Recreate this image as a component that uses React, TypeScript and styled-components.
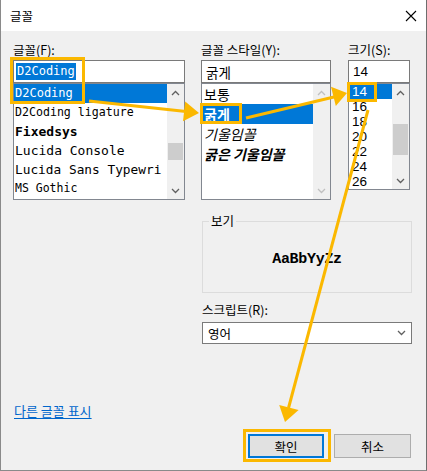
import React from "react";
import styled, { createGlobalStyle } from "styled-components";

const GlobalStyle = createGlobalStyle`
  html, body {
    margin: 0;
    padding: 0;
    background: #f0f0f0;
  }
  * {
    box-sizing: border-box;
  }
`;

const UI_FONT = `"Noto Sans CJK KR", "Noto Sans", sans-serif`;
const MONO = `"DejaVu Sans Mono", "Liberation Mono", monospace`;
const NUM_FONT = `"Liberation Sans", "Noto Sans", sans-serif`;
const ACCENT = "#fbb800";

const Dialog = styled.div`
  position: relative;
  width: 427px;
  height: 471px;
  background: #f0f0f0;
  border-left: 1px solid #8a8a8a;
  border-right: 1px solid #6e6e6e;
  border-bottom: 1px solid #8a8a8a;
  font-family: ${UI_FONT};
  font-size: 12px;
  color: #000;
  display: flex;
  flex-direction: column;
  overflow: hidden;
`;

const TitleBar = styled.div`
  height: 31px;
  background: #fff;
  display: flex;
  align-items: center;
  justify-content: space-between;
  padding: 0 9px 0 9px;
  font-size: 12.5px;
`;

const Body = styled.div`
  flex: 1;
  display: flex;
  flex-direction: column;
  padding: 11px 15px 0 12px;
`;

const Columns = styled.div`
  display: grid;
  grid-template-columns: 172px 130px 63px;
  column-gap: 16px;
  & > :nth-child(3) {
    margin-left: 1px;
  }
`;

const Column = styled.div`
  display: flex;
  flex-direction: column;
`;

const Label = styled.div`
  height: 16px;
  line-height: 16px;
  margin-bottom: 2px;
  white-space: nowrap;
  font-size: 12.5px;
`;

const TextField = styled.div<{ $font?: string; $pad?: number }>`
  height: 23px;
  background: #fff;
  border: 1px solid #7a7a7a;
  display: flex;
  align-items: center;
  padding-left: ${(p) => p.$pad ?? 2}px;
  font-family: ${(p) => p.$font || UI_FONT};
  font-size: 13.5px;
  white-space: nowrap;
`;

const Highlight = styled.span`
  background: #0078d7;
  color: #fff;
  padding: 0 1px;
  line-height: 17px;
  font-size: 12px;
`;

const ListBox = styled.div<{ $height: number }>`
  height: ${(p) => p.$height}px;
  background: #fff;
  border: 1px solid #828790;
  display: flex;
  overflow: hidden;
`;

const Items = styled.div`
  flex: 1;
  display: flex;
  flex-direction: column;
  min-width: 0;
`;

const Item = styled.div<{
  $selected?: boolean;
  $h: number;
  $font?: string;
  $size?: number;
  $bold?: boolean;
  $italic?: boolean;
  $pad?: number;
}>`
  height: ${(p) => p.$h}px;
  line-height: ${(p) => p.$h}px;
  flex-shrink: 0;
  padding-left: ${(p) => p.$pad ?? 1}px;
  white-space: nowrap;
  overflow: hidden;
  font-family: ${(p) => p.$font || UI_FONT};
  font-size: ${(p) => p.$size || 13}px;
  font-weight: ${(p) => (p.$bold ? 700 : 400)};
  font-style: ${(p) => (p.$italic ? "italic" : "normal")};
  background: ${(p) => (p.$selected ? "#0078d7" : "transparent")};
  color: ${(p) => (p.$selected ? "#fff" : "#000")};
`;

const ScrollBar = styled.div`
  width: 17px;
  background: #f0f0f0;
  display: flex;
  flex-direction: column;
`;

const ScrollArrow = styled.div`
  height: 17px;
  display: flex;
  align-items: center;
  justify-content: center;
  flex-shrink: 0;
`;

const Track = styled.div`
  flex: 1;
  display: flex;
  flex-direction: column;
  align-items: center;
`;

const Thumb = styled.div<{ $top: number; $h: number }>`
  margin-top: ${(p) => p.$top}px;
  width: 15px;
  height: ${(p) => p.$h}px;
  background: #cdcdcd;
`;

const LowerBlock = styled.div`
  margin-left: 189px;
  margin-top: 21px;
  width: 210px;
  display: flex;
  flex-direction: column;
`;

const GroupBox = styled.div`
  position: relative;
  height: 72px;
  border: 1px solid #dcdcdc;
  display: flex;
  align-items: center;
  justify-content: center;
`;

const Legend = styled.span`
  position: absolute;
  top: -9px;
  left: 6px;
  padding: 0 2px;
  line-height: 16px;
  font-size: 12.5px;
  background: #f0f0f0;
`;

const Sample = styled.div`
  font-family: "Liberation Mono", "DejaVu Sans Mono", monospace;
  font-weight: 700;
  font-size: 15px;
  margin-top: 5px;
  letter-spacing: -0.3px;
`;

const ScriptLabel = styled(Label)`
  margin-top: 9px;
  margin-bottom: 4px;
`;

const Select = styled.div`
  height: 22px;
  background: #fff;
  border: 1px solid #7a7a7a;
  display: flex;
  align-items: center;
  justify-content: space-between;
  padding: 0 5px 0 5px;
  font-size: 12.5px;
`;

const LinkText = styled.a`
  margin-top: 59px;
  align-self: flex-start;
  line-height: 16px;
  font-size: 13px;
  color: #0066cc;
  text-decoration: underline;
  text-underline-offset: 2px;
  cursor: pointer;
  margin-left: 1px;
`;

const ButtonRow = styled.div`
  margin-top: 15px;
  display: flex;
  justify-content: flex-end;
  gap: 10px;
`;

const Button = styled.button<{ $primary?: boolean }>`
  width: ${(p) => (p.$primary ? 76 : 77)}px;
  height: 24px;
  font-family: ${UI_FONT};
  font-size: 12.5px;
  color: #000;
  background: #e1e1e1;
  border: ${(p) => (p.$primary ? "2px solid #0078d7" : "1px solid #adadad")};
  padding: 0;
`;

const Overlay = styled.svg`
  position: absolute;
  left: -1px;
  top: 0;
  pointer-events: none;
`;

const Chevron = ({ up, color }: { up?: boolean; color: string }) => (
  <svg width="9" height="6" viewBox="0 0 9 6">
    <polyline
      points={up ? "1,5 4.5,1.5 8,5" : "1,1 4.5,4.5 8,1"}
      fill="none"
      stroke={color}
      strokeWidth="1.3"
    />
  </svg>
);

const Scroll = ({
  thumb,
  disabled,
}: {
  thumb?: { top: number; h: number };
  disabled?: boolean;
}) => {
  const c = disabled ? "#c0c0c0" : "#606060";
  return (
    <ScrollBar>
      <ScrollArrow>
        <Chevron up color={c} />
      </ScrollArrow>
      <Track>{thumb && <Thumb $top={thumb.top} $h={thumb.h} />}</Track>
      <ScrollArrow>
        <Chevron color={c} />
      </ScrollArrow>
    </ScrollBar>
  );
};

const fonts = [
  { name: "D2Coding", size: 12 },
  { name: "D2Coding ligature", size: 11.6 },
  { name: "Fixedsys", size: 13, bold: true },
  { name: "Lucida Console", size: 13 },
  { name: "Lucida Sans Typewri", size: 12.8 },
  { name: "MS Gothic", size: 11.5 },
];

const styles = [
  { name: "보통" },
  { name: "굵게", bold: true },
  { name: "기울임꼴", italic: true },
  { name: "굵은 기울임꼴", bold: true, italic: true },
];

const sizes = ["14", "16", "18", "20", "22", "24", "26"];

const Annotations = () => (
  <Overlay width="428" height="471" viewBox="0 0 428 471">
    <g fill="none" stroke={ACCENT} strokeWidth="3">
      <rect x="11.5" y="58.5" width="72" height="44" />
      <rect x="201.5" y="104.5" width="39" height="18" />
      <rect x="348.5" y="83.5" width="27" height="17" />
      <rect x="244.5" y="430.5" width="85" height="30" />
      <line x1="89" y1="101" x2="186" y2="111.5" />
      <line x1="246" y1="118" x2="335" y2="96.8" />
      <line x1="368" y1="110" x2="288.5" y2="408" />
    </g>
    <g fill={ACCENT}>
      <polygon points="199,113 183,121.3 185.2,101.5" />
      <polygon points="347,93 335.8,106.1 331,86.7" />
      <polygon points="285,422 298.6,410.1 279.2,404.9" />
    </g>
  </Overlay>
);

export default function App() {
  return (
    <>
      <GlobalStyle />
      <Dialog>
        <TitleBar>
          <span>글꼴</span>
          <svg width="12" height="12" viewBox="0 0 12 12">
            <path d="M1 1 L11 11 M11 1 L1 11" stroke="#000" strokeWidth="1.1" />
          </svg>
        </TitleBar>
        <Body>
          <Columns>
            <Column>
              <Label>글꼴(F):</Label>
              <TextField $font={MONO}>
                <Highlight>D2Coding</Highlight>
              </TextField>
              <ListBox $height={117}>
                <Items>
                  {fonts.map((f, i) => (
                    <Item
                      key={f.name}
                      $h={19}
                      $font={MONO}
                      $size={f.size}
                      $bold={f.bold}
                      $selected={i === 0}
                    >
                      {f.name}
                    </Item>
                  ))}
                </Items>
                <Scroll thumb={{ top: 42, h: 17 }} />
              </ListBox>
            </Column>
            <Column>
              <Label>글꼴 스타일(Y):</Label>
              <TextField $pad={4}>굵게</TextField>
              <ListBox $height={117}>
                <Items>
                  {styles.map((s, i) => (
                    <Item
                      key={s.name}
                      $h={20}
                      $size={14}
                      $bold={s.bold}
                      $italic={s.italic}
                      $pad={2}
                      $selected={i === 1}
                    >
                      {s.name}
                    </Item>
                  ))}
                </Items>
                <Scroll disabled />
              </ListBox>
            </Column>
            <Column>
              <Label>크기(S):</Label>
              <TextField $font={NUM_FONT} $pad={4}>
                14
              </TextField>
              <ListBox $height={107}>
                <Items>
                  {sizes.map((s, i) => (
                    <Item
                      key={s}
                      $h={15}
                      $font={NUM_FONT}
                      $size={13.5}
                      $pad={3}
                      $selected={i === 0}
                    >
                      {s}
                    </Item>
                  ))}
                </Items>
                <Scroll thumb={{ top: 23, h: 31 }} />
              </ListBox>
            </Column>
          </Columns>
          <LowerBlock>
            <GroupBox>
              <Legend>보기</Legend>
              <Sample>AaBbYyZz</Sample>
            </GroupBox>
            <ScriptLabel>스크립트(R):</ScriptLabel>
            <Select>
              <span>영어</span>
              <Chevron color="#606060" />
            </Select>
          </LowerBlock>
          <LinkText>다른 글꼴 표시</LinkText>
          <ButtonRow>
            <Button $primary>확인</Button>
            <Button>취소</Button>
          </ButtonRow>
        </Body>
        <Annotations />
      </Dialog>
    </>
  );
}
